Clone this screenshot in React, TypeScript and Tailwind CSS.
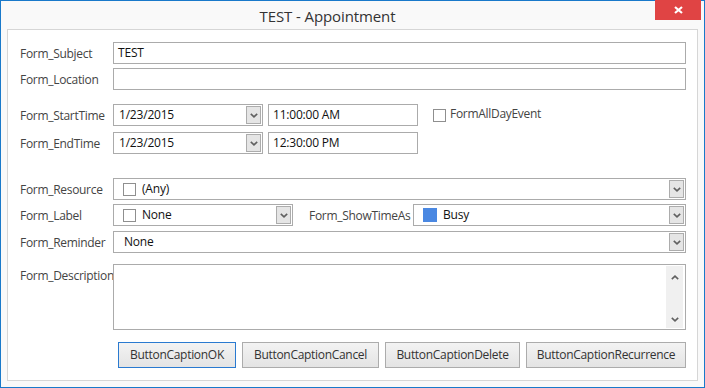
import React from "react";

const font = { fontFamily: '"Open Sans", "Noto Sans", sans-serif' };

function Chevron({ up = false }: { up?: boolean }) {
  return (
    <svg width="8" height="5" viewBox="0 0 8 5" className={up ? "rotate-180" : ""}>
      <path d="M0.8 0.8 L4 3.8 L7.2 0.8" fill="none" stroke="#606060" strokeWidth="1.6" />
    </svg>
  );
}

function DropBtn() {
  return (
    <div className="w-[15px] border border-[#acacac] bg-[#e5e5e5] flex items-center justify-center">
      <Chevron />
    </div>
  );
}

function Check() {
  return <div className="w-[13px] h-[13px] border border-[#8f8f8f] bg-white shrink-0" />;
}

function Label({ children, w = "w-[93px]" }: { children: React.ReactNode; w?: string }) {
  return (
    <div className={`${w} h-[22px] shrink-0 text-[12px] tracking-[-0.3px] text-[#444] leading-[24px] whitespace-nowrap`}>
      {children}
    </div>
  );
}

function TextBox({ value = "", className = "" }: { value?: string; className?: string }) {
  return (
    <div
      className={`h-[22px] border border-[#ababab] bg-white flex items-center pl-[4px] text-[12px] tracking-[-0.2px] text-[#111] ${className}`}
    >
      {value}
    </div>
  );
}

function Combo({ children, className = "" }: { children?: React.ReactNode; className?: string }) {
  return (
    <div className={`h-[22px] border border-[#ababab] bg-white flex items-stretch p-px ${className}`}>
      <div className="flex-1 flex items-center gap-[6px] pl-[8px] text-[12px] tracking-[-0.2px] text-[#111] min-w-0">
        {children}
      </div>
      <DropBtn />
    </div>
  );
}

function Btn({ children, primary = false, w }: { children: React.ReactNode; primary?: boolean; w: string }) {
  return (
    <div
      className={`${w} h-[26px] border ${primary ? "border-[#2a7ad0]" : "border-[#acacac]"} bg-gradient-to-b from-[#f3f3f3] to-[#e4e4e4] flex items-center justify-center text-[12px] tracking-[-0.3px] text-[#333]`}
    >
      {children}
    </div>
  );
}

export default function App() {
  return (
    <div style={font} className="w-[705px] h-[388px] border border-[#1979ca] bg-[#f9f9f9] flex flex-col">
      <div className="h-[28px] relative flex items-center justify-center shrink-0 pr-[50px]">
        <span className="text-[15px] text-[#333] mt-[3px] tracking-[-0.1px]">TEST - Appointment</span>
        <div className="absolute top-[-1px] right-[3px] w-[46px] h-[20px] bg-[#e04444] flex items-center justify-center">
          <svg width="9" height="8" viewBox="0 0 9 8">
            <path d="M1 1 L8 7 M8 1 L1 7" stroke="#fff" strokeWidth="2.2" />
          </svg>
        </div>
      </div>
      <div className="mx-[6px] h-[352px] border border-[#d6d6d6] bg-white pl-[12px] pr-[11px] pt-[12px] flex flex-col">
        <div className="flex">
          <Label>Form_Subject</Label>
          <TextBox value="TEST" className="flex-1" />
        </div>
        <div className="flex mt-[4px]">
          <Label>Form_Location</Label>
          <TextBox className="flex-1" />
        </div>
        <div className="flex mt-[14px] items-start">
          <Label>Form_StartTime</Label>
          <Combo className="w-[150px]"><span className="-ml-[4px]">1/23/2015</span></Combo>
          <TextBox value="11:00:00 AM" className="w-[150px] ml-[5px]" />
          <div className="ml-[15px] mt-[5px] flex items-center gap-[4px]">
            <Check />
            <span className="text-[12px] tracking-[-0.3px] text-[#444] leading-[13px] -mt-[4px]">FormAllDayEvent</span>
          </div>
        </div>
        <div className="flex mt-[6px]">
          <Label>Form_EndTime</Label>
          <Combo className="w-[150px]"><span className="-ml-[4px]">1/23/2015</span></Combo>
          <TextBox value="12:30:00 PM" className="w-[150px] ml-[5px]" />
        </div>
        <div className="flex mt-[24px]">
          <Label>Form_Resource</Label>
          <Combo className="flex-1">
            <Check />
            <span>(Any)</span>
          </Combo>
        </div>
        <div className="flex mt-[4px]">
          <Label>Form_Label</Label>
          <Combo className="w-[180px]">
            <Check />
            <span>None</span>
          </Combo>
          <div className="ml-[16px]">
            <Label w="w-[104px]">Form_ShowTimeAs</Label>
          </div>
          <Combo className="flex-1">
            <div className="w-[14px] h-[14px] bg-[#4a88e2] shrink-0" />
            <span>Busy</span>
          </Combo>
        </div>
        <div className="flex mt-[5px]">
          <Label>Form_Reminder</Label>
          <Combo className="flex-1">
            <span className="ml-[1px]">None</span>
          </Combo>
        </div>
        <div className="flex mt-[11px]">
          <Label>Form_Description</Label>
          <div className="flex-1 h-[66px] border border-[#ababab] bg-white flex justify-end py-px pr-[2px]">
            <div className="w-[17px] bg-[#f0f0f0] flex flex-col items-center justify-between pt-[9px] pb-[6px]">
              <Chevron up />
              <Chevron />
            </div>
          </div>
        </div>
        <div className="flex mt-[12px] pl-[98px] gap-[6px]">
          <Btn primary w="w-[118px]">ButtonCaptionOK</Btn>
          <Btn w="w-[137px]">ButtonCaptionCancel</Btn>
          <Btn w="w-[135px]">ButtonCaptionDelete</Btn>
          <Btn w="w-[160px]">ButtonCaptionRecurrence</Btn>
        </div>
      </div>
    </div>
  );
}
